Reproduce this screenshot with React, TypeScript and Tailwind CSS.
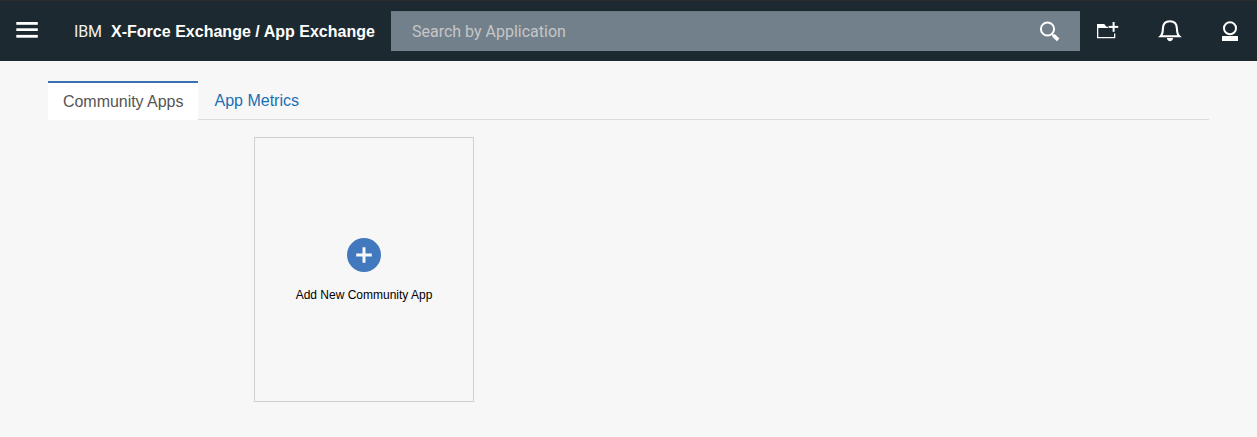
import React from "react";

function MenuIcon() {
  return (
    <svg width="22" height="18" viewBox="0 0 22 18" fill="#fff">
      <rect x="0.3" y="2" width="21.5" height="2.8" />
      <rect x="0.3" y="8.3" width="21.5" height="2.7" />
      <rect x="0.3" y="14.9" width="21.5" height="2.8" />
    </svg>
  );
}

function SearchIcon() {
  return (
    <svg width="22" height="22" viewBox="0 0 22 22" fill="none" stroke="#fff">
      <circle cx="8.5" cy="8" r="6.6" strokeWidth="2" />
      <path d="M12.9 13L15 15.2" strokeWidth="1.8" />
      <path d="M14.4 14.4L19.2 18.9" strokeWidth="3.6" />
    </svg>
  );
}

function FolderPlusIcon() {
  return (
    <svg width="22" height="18" viewBox="0 0 22 18" fill="#fff">
      <path d="M0 3H7.2L9.5 5.7H11V7H1.3V16H17V12.5H18.3V17.3H0Z" />
      <rect x="15.6" y="1" width="2" height="9.8" />
      <rect x="11.6" y="4.9" width="9.6" height="2" />
    </svg>
  );
}

function BellIcon() {
  return (
    <svg width="24" height="24" viewBox="0 0 24 24" fill="none" stroke="#fff">
      <path d="M2.6 17.2C4.6 15.4 4.8 13 4.9 9.6C5 5 7.6 2.2 11.9 2.2S18.8 5 18.9 9.6C19 13 19.2 15.4 21.2 17.2Z" strokeWidth="2.1" />
      <path d="M8.8 19H15.2C14.9 21 13.6 22.2 12 22.2S9.1 21 8.8 19Z" fill="#fff" stroke="none" />
    </svg>
  );
}

function UserIcon() {
  return (
    <svg width="18" height="20" viewBox="0 0 18 20">
      <circle cx="9" cy="7.2" r="6" fill="none" stroke="#fff" strokeWidth="2" />
      <rect x="1" y="15" width="16" height="5" rx="0.5" fill="#fff" />
    </svg>
  );
}

export default function App() {
  return (
    <div className="h-[437px] w-[1257px] overflow-hidden bg-[#f7f7f7] font-['Liberation_Sans',Arial,sans-serif]">
      <header className="flex h-[61px] items-start border-t border-[#2b2b2b] bg-[#1c2930] text-white">
        <button aria-label="Menu" className="ml-4 mt-[19px]">
          <MenuIcon />
        </button>
        <div className="ml-9 mt-[19px] flex w-[317px] whitespace-nowrap text-base leading-6">
          <span className="w-[37px] font-['Roboto',sans-serif] tracking-[-0.1px] text-[#f0f0f0]">IBM</span>
          <span className="font-bold tracking-[0.015px]">X-Force Exchange / App Exchange</span>
        </div>
        <div className="mt-2.5 flex h-10 w-[689px] items-center justify-between border-t border-[#6a7984] bg-[#72808c] pl-[21px] pr-[19px] font-['Roboto',sans-serif] text-base text-[#c6c6c6]">
          <span>Search by Application</span>
          <SearchIcon />
        </div>
        <button aria-label="Add collection" className="ml-[17px] mt-5">
          <FolderPlusIcon />
        </button>
        <button aria-label="Notifications" className="ml-[39px] mt-[18px]">
          <BellIcon />
        </button>
        <button aria-label="Account" className="ml-[39px] mt-5">
          <UserIcon />
        </button>
      </header>

      <main className="px-12 pt-5">
        <nav className="flex h-[39px] items-stretch text-base">
          <a className="w-[150px] whitespace-nowrap border-t-2 border-[#3d70b2] bg-white pl-[15px] pt-[7px] leading-6 tracking-[-0.04px] text-[#555]">
            Community Apps
          </a>
          <a className="flex-1 border-b border-[#dcdcdc] pl-[16.5px] pt-2 leading-6 text-[#1970b4]">App Metrics</a>
        </nav>
        <button className="ml-[206px] mt-[17px] flex h-[265px] w-[220px] flex-col items-center border border-[#d0d0d0] pt-[100px]">
          <svg width="34" height="34" viewBox="0 0 34 34">
            <circle cx="17" cy="17" r="17" fill="#4178be" />
            <path d="M17 9.2V24.8M9.2 17H24.8" stroke="#f7f7f7" strokeWidth="3" />
          </svg>
          <span className="mt-[15px] whitespace-nowrap text-xs leading-4 text-black">Add New Community App</span>
        </button>
      </main>
    </div>
  );
}
